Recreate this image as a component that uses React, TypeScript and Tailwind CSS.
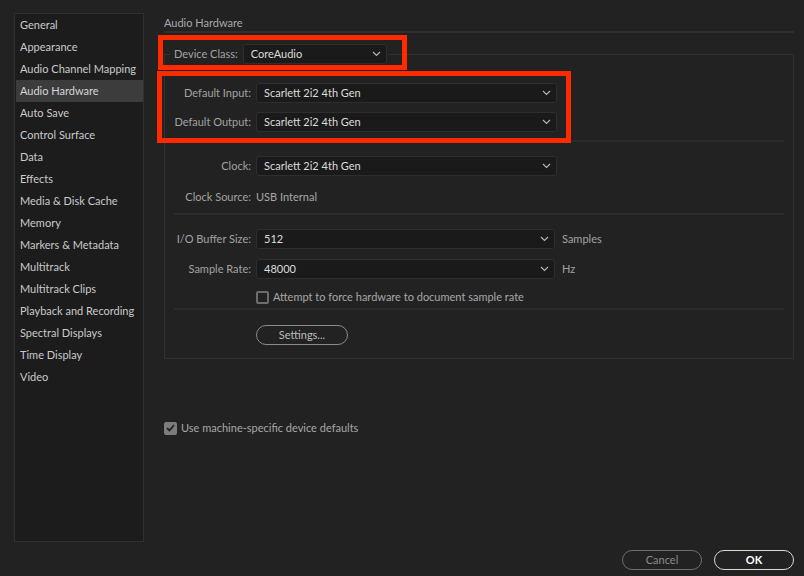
import React from 'react';

const categories = [
  'General',
  'Appearance',
  'Audio Channel Mapping',
  'Audio Hardware',
  'Auto Save',
  'Control Surface',
  'Data',
  'Effects',
  'Media & Disk Cache',
  'Memory',
  'Markers & Metadata',
  'Multitrack',
  'Multitrack Clips',
  'Playback and Recording',
  'Spectral Displays',
  'Time Display',
  'Video',
];

const Chevron = () => (
  <svg width="9" height="6" viewBox="0 0 9 6" className="shrink-0">
    <polyline points="1,1 4.5,4.5 8,1" fill="none" stroke="#b4b4b4" strokeWidth="1.2" />
  </svg>
);

const Select: React.FC<{ value: string; className?: string }> = ({ value, className = '' }) => (
  <div
    className={`h-[20px] flex items-center justify-between pl-[7px] pr-[5px] bg-[#1a1a1a] border border-[#2e2e2e] rounded-[3px] text-[#dcdcdc] ${className}`}
  >
    <span>{value}</span>
    <Chevron />
  </div>
);

const Row: React.FC<{ label: string; children: React.ReactNode; className?: string }> = ({
  label,
  children,
  className = '',
}) => (
  <div className={`flex items-center h-[20px] ${className}`}>
    <div className="w-[86px] text-right text-[#a2a2a2] shrink-0">{label}</div>
    <div className="ml-[5px] flex items-center">{children}</div>
  </div>
);

const Divider: React.FC<{ className?: string }> = ({ className = '' }) => (
  <div className={`h-[2px] bg-[#2c2c2c] mx-[9px] ${className}`} />
);

export default function App() {
  return (
    <div
      className="relative w-[804px] h-[576px] bg-[#222222] flex overflow-hidden text-[11px]"
      style={{ fontFamily: 'Lato, "Open Sans", sans-serif' }}
    >
      {/* category list */}
      <div className="pl-[14px] pt-[13px]">
        <div className="w-[130px] h-[529px] bg-[#1c1c1c] border border-[#303030]">
          {categories.map((c) => (
            <div
              key={c}
              className={`h-[22px] leading-[22px] ml-[1px] pl-[4px] whitespace-nowrap ${
                c === 'Audio Hardware' ? 'bg-[#3c3c3c] text-[#d6d6d6]' : 'text-[#cacaca]'
              }`}
            >
              {c}
            </div>
          ))}
        </div>
      </div>

      {/* settings pane */}
      <div className="ml-[20px] w-[630px] flex flex-col">
        <div className="pt-[14px]">
          <div className="h-[19px] leading-[18px] text-[#a8a8a8] border-b-2 border-[#2f2f2f]">
            Audio Hardware
          </div>
        </div>

        <fieldset className="mt-[11px] border border-[#313131] pt-[19px] pb-[13px] min-w-0">
          <legend className="ml-[6px] pl-[3px] pr-[1px] flex items-center h-[20px]">
            <span className="text-[#a2a2a2]">Device Class:</span>
            <Select value="CoreAudio" className="ml-[5px] w-[144px] pl-[6px]" />
          </legend>

          <Row label="Default Input:">
            <Select value="Scarlett 2i2 4th Gen" className="w-[301px]" />
          </Row>
          <Row label="Default Output:" className="mt-[9px]">
            <Select value="Scarlett 2i2 4th Gen" className="w-[301px]" />
          </Row>

          <Divider className="mt-[8px]" />

          <Row label="Clock:" className="mt-[14px]">
            <Select value="Scarlett 2i2 4th Gen" className="w-[301px]" />
          </Row>
          <Row label="Clock Source:" className="mt-[11px]">
            <span className="text-[#a8a8a8]">USB Internal</span>
          </Row>

          <Divider className="mt-[6px]" />

          <Row label="I/O Buffer Size:" className="mt-[14px]">
            <Select value="512" className="w-[299px]" />
            <span className="ml-[7px] text-[#a2a2a2]">Samples</span>
          </Row>
          <Row label="Sample Rate:" className="mt-[10px]">
            <Select value="48000" className="w-[299px]" />
            <span className="ml-[7px] text-[#a2a2a2]">Hz</span>
          </Row>

          <div className="flex items-center h-[14px] mt-[11px] pl-[91px]">
            <div className="w-[13px] h-[13px] border-2 border-[#6c6c6c] rounded-[2px]" />
            <span className="ml-[4px] text-[#a8a8a8]">Attempt to force hardware to document sample rate</span>
          </div>

          <Divider className="mt-[4px]" />

          <div className="mt-[15px] pl-[91px]">
            <button className="w-[92px] h-[20px] rounded-full border-[1.5px] border-[#8a8a8a] text-[#bdbdbd] flex items-center justify-center">
              Settings...
            </button>
          </div>
        </fieldset>

        <div className="mt-[62px] flex items-center h-[14px]">
          <div className="w-[13px] h-[13px] rounded-[2px] bg-[#7c7c7c] flex items-center justify-center">
            <svg width="9" height="8" viewBox="0 0 9 8">
              <polyline points="1,4 3.5,6.5 8,1.2" fill="none" stroke="#222" strokeWidth="1.8" />
            </svg>
          </div>
          <span className="ml-[4px] text-[#a8a8a8]">Use machine-specific device defaults</span>
        </div>

        <div className="mt-auto mb-[6px] flex justify-end gap-[12px]">
          <button className="w-[80px] h-[20px] rounded-full border-[1.5px] border-[#6e6e6e] text-[#8c8c8c] flex items-center justify-center">
            Cancel
          </button>
          <button className="w-[80px] h-[20px] rounded-full border-[1.5px] border-[#dadada] text-white font-bold flex items-center justify-center">
            OK
          </button>
        </div>
      </div>

      {/* red annotation boxes */}
      <div className="absolute left-[158px] top-[35px] w-[249px] h-[35px] border-[5px] border-[#fe2a00] pointer-events-none" />
      <div className="absolute left-[157px] top-[71px] w-[414px] h-[72px] border-[5px] border-[#fe2a00] pointer-events-none" />
    </div>
  );
}
